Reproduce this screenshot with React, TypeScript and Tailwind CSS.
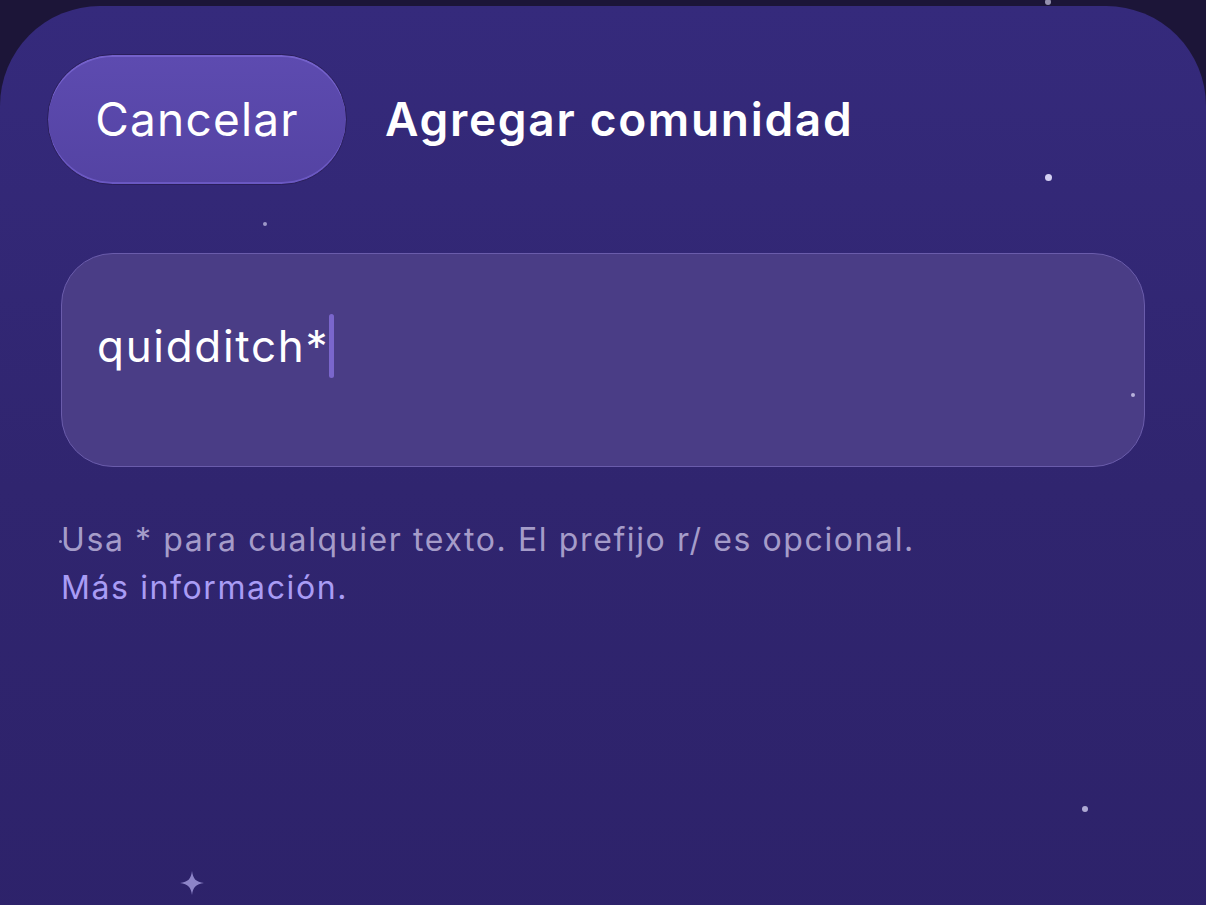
import React from 'react'

/**
 * "Agregar comunidad" sheet - filter input with wildcard hint.
 */
const stars = [
  { x: 1048, y: 2, s: 6, o: 'opacity-60' },
  { x: 1048, y: 177, s: 7, o: 'opacity-90' },
  { x: 265, y: 224, s: 4, o: 'opacity-60' },
  { x: 1133, y: 395, s: 4, o: 'opacity-70' },
  { x: 1085, y: 809, s: 6, o: 'opacity-70' },
  { x: 60, y: 541, s: 3, o: 'opacity-60' },
]

function Sparkle() {
  return (
    <svg width="28" height="28" viewBox="0 0 28 28" className="absolute left-[178px] top-[869px]">
      <path
        d="M14 2 C15 10 18 13 26 14 C18 15 15 18 14 26 C13 18 10 15 2 14 C10 13 13 10 14 2 Z"
        fill="#8d84c8"
      />
    </svg>
  )
}

export default function App() {
  return (
    <div
      className="relative w-[1206px] h-[905px] overflow-hidden bg-[#1c1538]"
      style={{ fontFamily: 'Inter, "Noto Sans", sans-serif' }}
    >
      <div className="mt-[6px] h-[960px] w-[1206px] rounded-t-[100px] bg-gradient-to-b from-[#352a7c] via-[#30256f] to-[#2d226a] px-[47px] pt-[48px]">
        {/* header */}
        <div className="flex items-center gap-[38px]">
          <button
            type="button"
            className="h-[131px] w-[300px] rounded-full border border-[#2a1f5c] bg-gradient-to-b from-[#5d4bb0] to-[#5443a3] text-[46px] tracking-[1.2px] text-white shadow-[inset_0_2px_0_rgba(160,140,255,0.35),inset_0_-2px_0_rgba(140,120,240,0.4)]"
          >
            Cancelar
          </button>
          <h1 className="text-[46px] font-semibold tracking-[1.7px] text-white">Agregar comunidad</h1>
        </div>

        {/* input */}
        <div className="ml-[14px] mt-[68px] h-[214px] w-[1084px] rounded-[52px] border border-[#6a5cab] bg-[#4a3d86] px-[35px] pt-[60px]">
          <div className="flex items-center">
            <span className="text-[44px] leading-[56px] tracking-[1.7px] text-white">quidditch*</span>
            <span className="h-[64px] w-[5px] rounded-full bg-[#7a66cc]" />
          </div>
        </div>

        {/* hint */}
        <p className="ml-[14px] mt-[49px] text-[32px] leading-[48px] tracking-[1.6px] text-[#a59cc9]">
          Usa * para cualquier texto. El prefijo r/ es opcional.
          <br />
          <span className="text-[#a99cf5]">Más información.</span>
        </p>
      </div>

      {stars.map((st, i) => (
        <span
          key={i}
          className={`absolute rounded-full bg-[#e6e2ff] ${st.o}`}
          style={{ left: st.x - st.s / 2, top: st.y - st.s / 2, width: st.s, height: st.s }}
        />
      ))}
      <Sparkle />
    </div>
  )
}
